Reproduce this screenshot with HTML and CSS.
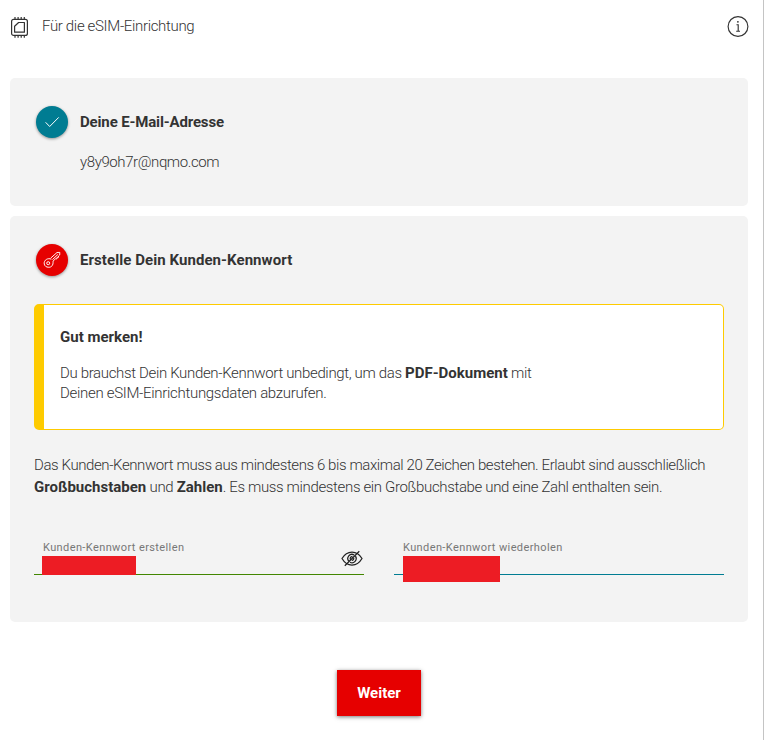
FILE: index.html
```html
<!DOCTYPE html>
<html lang="de">
<head>
<meta charset="utf-8">
<title>eSIM-Einrichtung</title>
<link rel="stylesheet" href="styles.css">
</head>
<body>
<main class="page">
  <header class="header">
    <svg class="chip" viewBox="0 0 20 24" width="20" height="24" fill="none" stroke="#333" stroke-width="1.2">
      <rect x="1.6" y="3.4" width="15.8" height="16" rx="2"/>
      <path d="M8.6 6.5H14.4V16.2H4.6V10.3Z" stroke-linejoin="round"/>
      <path d="M5 1V3.4M8.1 1V3.4M11.2 1V3.4M14.3 1V3.4M5 19.4v2.3M8.1 19.4v2.3M11.2 19.4v2.3M14.3 19.4v2.3"/>
    </svg>
    <span class="title">Für die eSIM-Einrichtung</span>
    <svg class="info" viewBox="0 0 22 22" width="22" height="22" fill="none" stroke="#333" stroke-width="1.15">
      <circle cx="11" cy="10.5" r="9.9"/>
      <path d="M9.5 8.7H11.2V15.2M9.2 15.2H13"/>
      <circle cx="10.9" cy="5.8" r=".9" fill="#333" stroke="none"/>
    </svg>
  </header>

  <section class="card card-mail">
    <div class="step">
      <span class="badge badge-done">
        <svg viewBox="0 0 32 32" width="32" height="32" fill="none" stroke="#fff" stroke-width="1"><path d="M9.6 16.3L13.7 20.5L22.7 11.4"/></svg>
      </span>
      <h2 class="mail-heading">Deine E-Mail-Adresse</h2>
    </div>
    <p class="mail">y8y9oh7r@nqmo.com</p>
  </section>

  <section class="card card-password">
    <div class="step">
      <span class="badge badge-active">
        <svg viewBox="0 0 32 32" width="32" height="32" fill="none" stroke="#fff" stroke-width=".95" stroke-linejoin="round">
          <path d="M14.7 14.1L21 8.5L23.8 8.4L23.7 11L22.5 12L22.5 13.3L21 13.4L21 14.8L19.4 14.9L17 17.2C17.5 21.3 15.4 23.3 12.8 23.3C7.4 23.3 6.8 17.3 10.6 15.3C12 14.6 13.4 14.4 15.4 15.2"/>
          <circle cx="12.2" cy="19.2" r="1.5"/><path d="M16.5 15.5L21.9 10.5"/>
        </svg>
      </span>
      <h2 class="password-heading">Erstelle Dein Kunden-Kennwort</h2>
    </div>
    <div class="notice">
      <h3>Gut merken!</h3>
      <p><span class="n1">Du brauchst Dein Kunden-Kennwort unbedingt, um das <b>PDF-Dokument</b> mit</span><br><span class="n2">Deinen eSIM-Einrichtungsdaten abzurufen.</span></p>
    </div>
    <p class="rules"><span class="r1">Das Kunden-Kennwort muss aus mindestens 6 bis maximal 20 Zeichen bestehen. Erlaubt sind ausschließlich</span><br><span class="r2"><b>Großbuchstaben</b> und <b>Zahlen</b>. Es muss mindestens ein Großbuchstabe und eine Zahl enthalten sein.</span></p>
    <div class="fields">
      <div class="field field-valid">
        <span class="label label-create">Kunden-Kennwort erstellen</span>
        <span class="mask mask-create"></span>
        <svg class="eye" viewBox="0 0 22 18" width="22" height="18" fill="none" stroke="#222" stroke-width="1.25">
          <path d="M1 8.5C6-.1 16-.1 21 8.5C16 17.2 6 17.2 1 8.5Z"/>
          <path d="M8 11.5A4.2 4.2 0 0 1 13.2 5M14.5 6.2A4.2 4.2 0 0 1 9 12.2M9.5 9.5A1.8 1.8 0 0 1 11.5 6.8M12.7 8A1.8 1.8 0 0 1 10.8 10.3M3.8 15.8L18.3 1.2"/>
        </svg>
      </div>
      <div class="field field-focus">
        <span class="label label-repeat">Kunden-Kennwort wiederholen</span>
        <span class="mask mask-repeat"></span>
      </div>
    </div>
  </section>

  <button class="submit" type="button"><span>Weiter</span></button>
</main>
</body>
</html>
```

FILE: styles.css
```css
* { box-sizing: border-box; }
body { margin: 0; background: #fff; color: #333; font: 300 15px/20px Roboto, "Liberation Sans", sans-serif; overflow: hidden; }
h2, h3, p { margin: 0; }
h2, h3 { font-size: 15px; line-height: 20px; font-weight: 700; }
b { font-weight: 700; letter-spacing: 0; }
span { white-space: nowrap; }
svg { display: block; }
.page { width: 764px; height: 740px; padding: 0 14px 0 10px; border-right: 1px solid #c4c4c4; display: flex; flex-direction: column; }
.header { height: 78px; flex: none; display: flex; align-items: flex-start; padding-top: 16px; }
.title { margin-left: 12px; letter-spacing: -.34px; }
.info { margin-left: auto; }
.card { width: 738px; flex: none; background: #f3f3f3; border-radius: 5px; padding: 28px 24px 0; }
.card-mail { height: 128px; }
.card-password { height: 406px; margin-top: 10px; }
.step { display: flex; align-items: center; height: 32px; padding-left: 2px; }
.badge { width: 32px; height: 32px; border-radius: 50%; margin-right: 12px; box-shadow: 0 1px 3px #0006; }
.badge-done { background: #007c92; }
.badge-active { background: #e60000; }
.mail-heading { letter-spacing: -.15px; }
.password-heading { letter-spacing: .07px; }
.mail { margin: 14px 0 0 46px; letter-spacing: -.4px; }
.notice { margin-top: 28px; height: 126px; padding: 22px 16px 0; background: #fff; border: 1px solid #fecb00; border-left-width: 10px; border-radius: 5px; }
.notice p { margin-top: 16px; }
.n1 { letter-spacing: -.345px; }
.n2 { letter-spacing: -.31px; }
.r1 { letter-spacing: -.41px; }
.r2 { letter-spacing: -.35px; }
.rules { margin-top: 24px; line-height: 22px; }
.fields { display: grid; grid-template-columns: 330px 330px; column-gap: 30px; margin-top: 42px; }
.field { height: 35px; border-bottom: 1px solid; display: grid; grid-template-columns: 1fr auto; grid-template-rows: 16px 18px; padding: 0 1px 0 8px; }
.field-valid { border-color: #428600; }
.field-focus { border-color: #007c92; }
.label { grid-column: 1; grid-row: 1; padding-left: 1px; font-size: 11px; line-height: 16px; font-weight: 400; letter-spacing: .39px; color: #777; }
.mask { grid-column: 1; grid-row: 2; background: #ed1c24; }
.mask-create { width: 94px; height: 19px; }
.mask-repeat { width: 97px; height: 26px; margin-left: 1px; }
.eye { grid-column: 2; grid-row: 1 / 3; margin-top: 10px; }
.submit { width: 84px; height: 46px; flex: none; margin: 48px 0 0 327px; padding: 0; border: 0; background: #e60000; color: #fff; font: 700 15px/20px Roboto, sans-serif; box-shadow: 0 1px 4px #0008; }
```
